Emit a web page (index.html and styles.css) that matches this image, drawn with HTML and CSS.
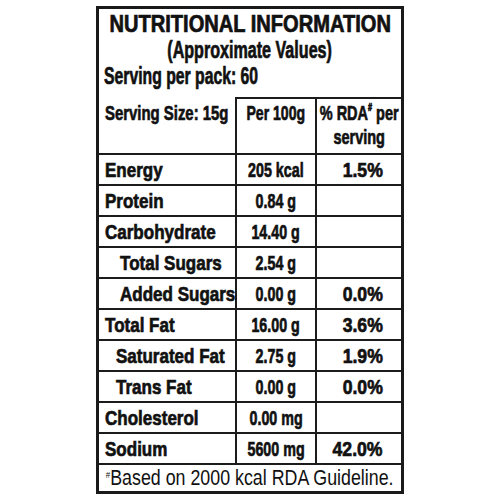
FILE: index.html
```html
<!DOCTYPE html>
<html>
<head>
<meta charset="utf-8">
<link rel="stylesheet" href="styles.css">
</head>
<body>
<div class="label">
  <div class="head">
    <div class="title"><span class="t t-title">NUTRITIONAL INFORMATION</span></div>
    <div class="subtitle"><span class="t t-sub">(Approximate Values)</span></div>
    <div class="serving"><span class="t t-serv">Serving per pack: 60</span></div>
  </div>
  <div class="grid">
    <div class="c c1 hdr nb"><span class="t t-h1">Serving Size: 15g</span></div>
    <div class="c c2 hdr"><span class="t t-h2">Per 100g</span></div>
    <div class="c c3 hdr"><span class="t t-h3">% RDA<sup>#</sup> per<br>serving</span></div>

    <div class="c c1"><span class="t t-l">Energy</span></div>
    <div class="c c2"><span class="t t-v">205 kcal</span></div>
    <div class="c c3"><span class="t t-p">1.5%</span></div>

    <div class="c c1"><span class="t t-l">Protein</span></div>
    <div class="c c2"><span class="t t-v">0.84 g</span></div>
    <div class="c c3"></div>

    <div class="c c1"><span class="t t-l">Carbohydrate</span></div>
    <div class="c c2"><span class="t t-v">14.40 g</span></div>
    <div class="c c3"></div>

    <div class="c c1 in-sugar"><span class="t t-l">Total Sugars</span></div>
    <div class="c c2"><span class="t t-v">2.54 g</span></div>
    <div class="c c3"></div>

    <div class="c c1 in-sugar"><span class="t t-l">Added Sugars</span></div>
    <div class="c c2"><span class="t t-v">0.00 g</span></div>
    <div class="c c3"><span class="t t-p">0.0%</span></div>

    <div class="c c1"><span class="t t-l">Total Fat</span></div>
    <div class="c c2"><span class="t t-v">16.00 g</span></div>
    <div class="c c3"><span class="t t-p">3.6%</span></div>

    <div class="c c1 in-fat"><span class="t t-l">Saturated Fat</span></div>
    <div class="c c2"><span class="t t-v">2.75 g</span></div>
    <div class="c c3"><span class="t t-p">1.9%</span></div>

    <div class="c c1 in-fat"><span class="t t-l">Trans Fat</span></div>
    <div class="c c2"><span class="t t-v">0.00 g</span></div>
    <div class="c c3"><span class="t t-p">0.0%</span></div>

    <div class="c c1"><span class="t t-l">Cholesterol</span></div>
    <div class="c c2"><span class="t t-v">0.00 mg</span></div>
    <div class="c c3"></div>

    <div class="c c1"><span class="t t-l">Sodium</span></div>
    <div class="c c2"><span class="t t-v">5600 mg</span></div>
    <div class="c c3"><span class="t t-p">42.0%</span></div>
  </div>
  <div class="foot"><span class="t t-foot"><sup>#</sup>Based on 2000 kcal RDA Guideline.</span></div>
</div>
</body>
</html>
```
FILE: styles.css
```css
* { box-sizing: border-box; }
body {
  margin: 0;
  background: #fff;
  color: #111;
  font-family: "Liberation Sans", Arial, sans-serif;
}
.label {
  width: 308px;
  height: 488px;
  margin: 6px auto 0;
  border: 3px solid #1a1a1a;
  display: flex;
  flex-direction: column;
}
.head {
  height: 88px;
  padding: 2px 0 6px;
  font-weight: 700;
  font-size: 23px;
  -webkit-text-stroke: 0.7px #111;
}
.title, .subtitle, .serving {
  height: 26px;
  line-height: 26px;
  display: flex;
  white-space: nowrap;
}
.title, .subtitle { justify-content: center; }
.serving { padding-left: 5px; }

.t {
  display: inline-block;
  white-space: nowrap;
  transform-origin: center;
}
.t-title { transform: scaleX(0.873); }
.t-sub { transform: scaleX(0.70); }
.t-serv { transform: scaleX(0.685); transform-origin: left center; }

.grid {
  display: grid;
  grid-template-columns: 136px 80px 86px;
  grid-template-rows: 56px repeat(10, 31px);
  font-weight: 700;
  font-size: 21px;
  -webkit-text-stroke: 0.7px #111;
}
.c {
  display: flex;
  align-items: center;
  border-top: 2px solid #1c1c1c;
  line-height: 29px;
  white-space: nowrap;
  min-width: 0;
}
.c1 { padding-left: 6px; }
.c1 .t { transform-origin: left center; }
.c2 { justify-content: center; border-left: 2px solid #1c1c1c; }
.c3 { justify-content: flex-end; padding-right: 18px; border-left: 2px solid #1c1c1c; }
.c3 .t { transform-origin: right center; }
.in-sugar { padding-left: 21px; }
.in-fat { padding-left: 17px; }

.hdr {
  align-items: flex-start;
  padding-top: 2px;
  line-height: 24px;
}
.hdr.nb { border-top-color: transparent; }
.c3.hdr { justify-content: center; padding-right: 0; }
.c3.hdr .t { transform-origin: center top; text-align: center; }

.t-h1 { transform: scaleX(0.71); }
.t-h2 { transform: scaleX(0.67); }
.t-h3 { transform: scaleX(0.69); }
.t-l { transform: scaleX(0.81); }
.t-v { transform: scaleX(0.68); }
.t-p { transform: scaleX(0.84); }

sup {
  font-size: 0.5em;
  line-height: 0;
  vertical-align: 0.9em;
}

.foot {
  height: 28px;
  border-top: 2px solid #1c1c1c;
  display: flex;
  justify-content: center;
  font-size: 22px;
  line-height: 26px;
  white-space: nowrap;
}
.t-foot { transform: scaleX(0.81); }
.t-foot sup { vertical-align: 0.75em; font-size: 0.45em; }
```
